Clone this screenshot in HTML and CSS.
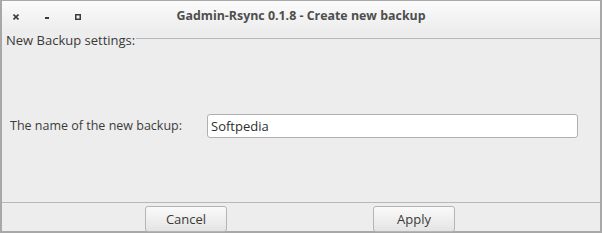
FILE: index.html
```html
<!DOCTYPE html>
<html>
<head>
<meta charset="utf-8">
<link rel="stylesheet" href="styles.css">
</head>
<body>
<div class="window">
  <div class="titlebar">
    <div class="controls">
      <span class="ctl">
        <svg width="6" height="6" viewBox="0 0 6 6"><path d="M0.5 0.5L5.5 5.5M5.5 0.5L0.5 5.5" stroke="#3c3c3c" stroke-width="1.6"/></svg>
      </span>
      <span class="ctl">
        <svg width="6" height="6" viewBox="0 0 6 6"><rect x="1" y="3" width="4" height="2" fill="#3c3c3c"/></svg>
      </span>
      <span class="ctl">
        <svg width="6" height="6" viewBox="0 0 6 6"><rect x="0.75" y="0.75" width="4.5" height="4.5" fill="none" stroke="#3c3c3c" stroke-width="1.5"/></svg>
      </span>
    </div>
    <div class="title">Gadmin-Rsync 0.1.8 - Create new backup</div>
  </div>
  <div class="frame">
    <div class="frame-label">New Backup settings:</div>
    <div class="frame-body">
      <div class="row">
        <span class="label">The name of the new backup:</span>
        <div class="entry">Softpedia</div>
      </div>
    </div>
  </div>
  <div class="buttons">
    <div class="btn cancel">Cancel</div>
    <div class="btn apply">Apply</div>
  </div>
</div>
</body>
</html>
```
FILE: styles.css
```css
html, body {
  margin: 0;
  padding: 0;
  background: #ededed;
}
body {
  width: 602px;
  height: 233px;
  overflow: hidden;
  font-family: "Open Sans", "Noto Sans", sans-serif;
  font-size: 13px;
  color: #3c3c3c;
}
.window {
  width: 602px;
  height: 233px;
  box-sizing: border-box;
  border-left: 2px solid #a8a8a8;
  border-right: 2px solid #a8a8a8;
  border-bottom: 2px solid #a8a8a8;
  display: flex;
  flex-direction: column;
  background: #ededed;
}
.titlebar {
  height: 33px;
  flex: none;
  position: relative;
  border-top: 1px solid #a8a8a8;
  box-sizing: border-box;
  background: linear-gradient(#fbfbfb, #ececec);
  display: flex;
  align-items: center;
}
.controls {
  display: flex;
  gap: 25px;
  padding-left: 11px;
  margin-top: -1px;
}
.ctl {
  width: 6px;
  height: 6px;
  display: flex;
}
.title {
  position: absolute;
  left: 0;
  right: 0;
  top: 6px;
  text-align: center;
  font-weight: bold;
  font-size: 12.4px;
  color: #4e4e4e;
}
.frame {
  flex: 1;
  display: flex;
  flex-direction: column;
  border-bottom: 1px solid #b8b8b8;
  position: relative;
}
.frame::before {
  content: "";
  position: absolute;
  left: 0;
  right: 0;
  top: 5px;
  border-top: 1px solid #b8b8b8;
}
.frame-label {
  position: relative;
  align-self: flex-start;
  background: #ededed;
  padding: 0 1px 0 4px;
  line-height: 16px;
  margin-top: -1px;
  color: #3a3a3a;
}
.frame-body {
  flex: 1;
  display: flex;
  align-items: center;
}
.row {
  display: flex;
  align-items: center;
  padding-left: 8px;
  margin-top: 1px;
}
.label {
  width: 197px;
  font-size: 12.5px;
}
.entry {
  width: 366px;
  height: 22px;
  border: 1px solid #b0b0b0;
  border-radius: 3px;
  background: #fff;
  padding-left: 3px;
  line-height: 22px;
  color: #2e2e2e;
}
.buttons {
  height: 28px;
  flex: none;
  display: flex;
  align-items: flex-end;
}
.btn {
  width: 80px;
  height: 24px;
  border: 1px solid #b4b4b4;
  border-radius: 3px;
  background: linear-gradient(#fafafa, #e4e4e4);
  text-align: center;
  line-height: 24px;
  color: #3a3a3a;
  box-sizing: content-box;
  margin-bottom: -1px;
}
.cancel { margin-left: 143px; }
.apply { margin-left: 146px; }
```
